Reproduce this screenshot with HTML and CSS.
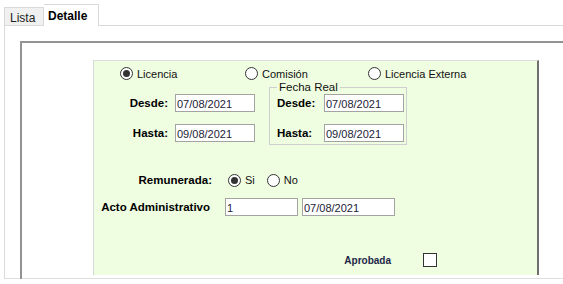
FILE: index.html
```html
<!DOCTYPE html>
<html lang="es">
<head>
    <meta charset="UTF-8">
    <title>Licencias - Detalle</title>
    <link rel="stylesheet" href="styles.css">
</head>
<body>
    <div class="tabs">
        <div class="tab">Lista</div>
        <div class="tab active">Detalle</div>
    </div>
    <div class="pane">
        <div class="frame">
            <div class="panel">
                <div class="types">
                    <label class="opt"><span class="radio checked"></span>Licencia</label>
                    <label class="opt"><span class="radio"></span>Comisión</label>
                    <label class="opt"><span class="radio"></span>Licencia Externa</label>
                </div>

                <div class="dates">
                    <div class="date-block">
                        <div class="row">
                            <span class="lbl lbl-dates">Desde:</span>
                            <input class="txt txt-date" type="text" value="07/08/2021">
                        </div>
                        <div class="row">
                            <span class="lbl lbl-dates">Hasta:</span>
                            <input class="txt txt-date" type="text" value="09/08/2021">
                        </div>
                    </div>
                    <fieldset class="real">
                        <legend>Fecha Real</legend>
                        <div class="row">
                            <span class="lbl lbl-real">Desde:</span>
                            <input class="txt txt-date" type="text" value="07/08/2021">
                        </div>
                        <div class="row">
                            <span class="lbl lbl-real">Hasta:</span>
                            <input class="txt txt-date" type="text" value="09/08/2021">
                        </div>
                    </fieldset>
                </div>

                <div class="row paid">
                    <span class="lbl lbl-paid">Remunerada:</span>
                    <label class="opt"><span class="radio checked"></span>Si</label>
                    <label class="opt opt-no"><span class="radio"></span>No</label>
                </div>

                <div class="row act">
                    <span class="lbl lbl-act">Acto Administrativo</span>
                    <input class="txt txt-num" type="text" value="1">
                    <input class="txt txt-actdate" type="text" value="07/08/2021">
                </div>

                <div class="row approved">
                    <span class="lbl-approved">Aprobada</span>
                    <span class="check"></span>
                </div>
            </div>
        </div>
    </div>
</body>
</html>
```
FILE: styles.css
```css
body {
    margin: 0;
    font-family: 'Liberation Sans', Arial, sans-serif;
    background-color: white;
    color: #000;
}
.tabs {
    display: flex;
    align-items: flex-end;
    height: 25px;
    padding-left: 4px;
    position: relative;
    z-index: 1;
}
.tab {
    box-sizing: border-box;
    width: 40px;
    height: 18px;
    padding: 3px 0 0 5px;
    font-size: 12px;
    background-color: #f0f0f0;
    border: 1px solid #d9d9d9;
    border-bottom: none;
    color: #222;
}
.tab.active {
    width: 55px;
    height: 22px;
    margin-bottom: -1px;
    padding: 4px 0 0 4px;
    font-weight: bold;
    background-color: white;
    border-left: none;
    color: #000;
}
.pane {
    box-sizing: border-box;
    height: 254px;
    padding: 15px 0 0 15px;
    border-top: 1px solid #d9d9d9;
    border-left: 1px solid #d9d9d9;
    border-bottom: 1px solid #dedede;
    margin-left: 4px;
}
.frame {
    height: 236px;
    border-top: 2px solid #939393;
    border-left: 2px solid #939393;
    padding: 17px 0 0 71px;
}
.panel {
    box-sizing: border-box;
    width: 446px;
    height: 215px;
    background-color: #effde0;
    border-top: 1px solid #dcdcdc;
    border-left: 1px solid #d8d8d8;
    border-right: 2px solid #6f6f6f;
}
.row {
    display: flex;
    align-items: center;
    height: 18px;
}
.opt {
    display: flex;
    align-items: center;
    font-size: 11px;
    color: #111;
}
.radio {
    box-sizing: border-box;
    width: 13px;
    height: 13px;
    margin-right: 4px;
    border: 1px solid #333;
    border-radius: 50%;
    background-color: white;
    display: flex;
    align-items: center;
    justify-content: center;
}
.radio.checked::after {
    content: "";
    width: 7px;
    height: 7px;
    border-radius: 50%;
    background-color: #333;
}
.types {
    display: grid;
    grid-template-columns: 125px 123px auto;
    height: 13px;
    margin-top: 6px;
    padding-left: 26px;
}
.dates {
    display: flex;
    align-items: flex-start;
    padding-top: 1px;
}
.date-block {
    margin-top: 13px;
}
.date-block .row + .row {
    margin-top: 12px;
}
.lbl {
    font-size: 11.5px;
    font-weight: bold;
}
.lbl-dates {
    width: 74px;
    margin-right: 7px;
    text-align: right;
}
.txt {
    box-sizing: border-box;
    height: 18px;
    margin: 0;
    padding: 1px 0 0 1px;
    font-family: 'Liberation Sans', Arial, sans-serif;
    font-size: 11px;
    color: #1c1c36;
    background-color: white;
    border: 1px solid #a3a3a3;
    border-radius: 0;
    outline: none;
}
.txt-date {
    width: 80px;
}
.real {
    box-sizing: border-box;
    width: 138px;
    margin: 0 0 0 14px;
    padding: 1px 2px 2px 7px;
    border: 1px solid #cfcfcf;
}
.real legend {
    margin-left: 0;
    padding: 0 2px;
    font-size: 11.5px;
    line-height: 12px;
    color: #111;
}
.real .row + .row {
    margin-top: 12px;
}
.lbl-real {
    width: 47px;
}
.paid {
    height: 14px;
    margin-top: 28px;
}
.lbl-paid {
    width: 118px;
    margin-right: 16px;
    text-align: right;
}
.opt-no {
    margin-left: 12px;
}
.act {
    margin-top: 11px;
}
.lbl-act {
    width: 116px;
    margin-right: 15px;
    text-align: right;
}
.txt-num {
    width: 73px;
    margin-right: 4px;
}
.txt-actdate {
    width: 93px;
}
.approved {
    height: 14px;
    margin-top: 37px;
}
.lbl-approved {
    width: 297px;
    margin-right: 32px;
    text-align: right;
    font-size: 10px;
    font-weight: bold;
    color: #1c2748;
}
.check {
    box-sizing: border-box;
    width: 14px;
    height: 14px;
    border: 1px solid #333;
    background-color: white;
}
```
